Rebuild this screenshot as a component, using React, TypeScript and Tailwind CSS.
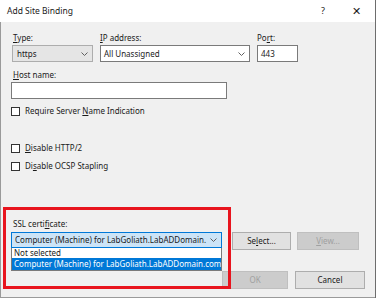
import React from "react";

// access key underline
const K = ({ children }: { children: React.ReactNode }) => (
  <span className="underline underline-offset-[1px]">{children}</span>
);

function Chevron() {
  return (
    <svg width="7" height="4" viewBox="0 0 7 4" className="shrink-0">
      <path d="M0.5 0.5 L3.5 3.5 L6.5 0.5" fill="none" stroke="#606060" strokeWidth="1" />
    </svg>
  );
}

function Check({ children }: { children: React.ReactNode }) {
  return (
    <div className="flex items-center h-[12px] -ml-[1px]">
      <div className="w-[9px] h-[9px] border border-[#333] bg-white" />
      <span className="ml-[5px]">{children}</span>
    </div>
  );
}

export default function App() {
  return (
    <div className="relative w-[377px] h-[300px] overflow-hidden bg-white font-['Noto_Sans',sans-serif] text-[8px] leading-[12px] text-[#1a1a1a]">
      <div className="h-[298px] w-[376px] border-r border-[#6d6d6d] flex flex-col">
        {/* title bar */}
        <div className="h-[22px] shrink-0 bg-white flex items-center pl-[7px] pr-[14px]">
          <span className="text-[8.5px]">Add Site Binding</span>
          <span className="ml-auto text-[9px]">?</span>
          <span className="ml-[27px] text-[11px] font-light">✕</span>
        </div>

        {/* body */}
        <div className="flex-1 bg-[#f0f0f0] border-l border-b border-[#9a9a9a] pl-[11px] pt-[10px] flex flex-col">
          <div className="flex">
            <div className="w-[81px] flex flex-col">
              <span className="pl-[1px]"><K>T</K>ype:</span>
              <div className="mt-[1px] h-[17px] border border-[#adadad] bg-[#e5e5e5] flex items-center pl-[4px] pr-[4px]">
                <span className="flex-1">https</span>
                <Chevron />
              </div>
            </div>
            <div className="ml-[7px] w-[150px] flex flex-col">
              <span><K>I</K>P address:</span>
              <div className="mt-[1px] h-[17px] border border-[#7a7a7a] bg-white flex items-center pl-[3px] pr-[4px]">
                <span className="flex-1">All Unassigned</span>
                <Chevron />
              </div>
            </div>
            <div className="ml-[7px] w-[41px] flex flex-col">
              <span>Po<K>r</K>t:</span>
              <div className="mt-[1px] h-[17px] border border-[#7a7a7a] bg-white flex items-center pl-[3px]">
                443
              </div>
            </div>
          </div>

          <span className="mt-[7px] pl-[1px]"><K>H</K>ost name:</span>
          <div className="mt-[1px] -ml-[1px] w-[216px] h-[17px] border border-[#7a7a7a] bg-white" />

          <div className="mt-[6px]">
            <Check>Require Server <K>N</K>ame Indication</Check>
          </div>
          <div className="mt-[25px]">
            <Check><K>D</K>isable HTTP/2</Check>
          </div>
          <div className="mt-[6px]">
            <Check>Di<K>s</K>able OCSP Stapling</Check>
          </div>

          <span className="mt-[46px] pl-[1px]">SSL certi<K>f</K>icate:</span>
          <div className="mt-[2px] flex items-start">
            <div className="-ml-[1px] w-[211px] h-[16px] border border-[#0078d7] bg-[#cce4f7] flex items-center pl-[3px] pr-[4px]">
              <span className="flex-1 whitespace-nowrap overflow-hidden">Computer (Machine) for LabGoliath.LabADDomain.</span>
              <Chevron />
            </div>
            <button className="ml-[10px] w-[59px] h-[18px] border border-[#adadad] bg-[#e1e1e1] leading-[16px]">
              Se<K>l</K>ect...
            </button>
            <button className="ml-[6px] w-[62px] h-[18px] border border-[#bfbfbf] bg-[#cccccc] text-[#a0a0a0] leading-[16px]">
              <K>V</K>iew...
            </button>
          </div>

          <div className="mt-[21px] flex justify-end pr-[10px]">
            <button className="w-[66px] h-[18px] border border-[#bfbfbf] bg-[#cccccc] text-[#a0a0a0] leading-[16px]">
              OK
            </button>
            <button className="ml-[7px] w-[70px] h-[18px] border border-[#adadad] bg-[#e1e1e1] leading-[16px]">
              Cancel
            </button>
          </div>
        </div>
      </div>

      {/* open dropdown list */}
      <div className="absolute left-[11px] top-[248px] w-[211px] h-[23px] bg-white border border-[#7a7a7a] border-t-0">
        <div className="h-[10px] leading-[10px] pl-[2px]">Not selected</div>
        <div className="h-[12px] leading-[12px] pl-[2px] bg-[#0078d7] text-white whitespace-nowrap overflow-hidden">
          Computer (Machine) for LabGoliath.LabADDomain.com
        </div>
      </div>

      {/* red annotation */}
      <div className="absolute left-[3px] top-[207px] w-[228px] h-[82px] border-[3px] border-[#e8141e] pointer-events-none" />
    </div>
  );
}
